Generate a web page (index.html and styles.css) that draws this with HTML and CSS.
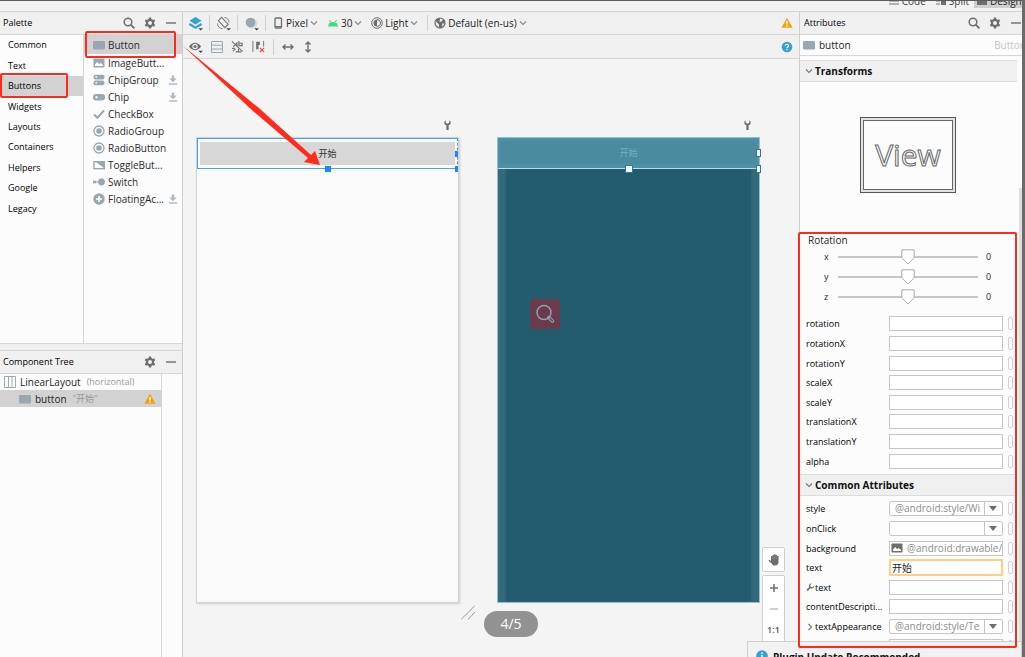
FILE: index.html
```html
<!DOCTYPE html>
<html lang="en">
<head>
<meta charset="utf-8">
<title>Layout Editor</title>
<link rel="stylesheet" href="styles.css">
</head>
<body>
<svg class="defs" aria-hidden="true">
  <symbol id="search" viewBox="0 0 12 12"><circle cx="5" cy="5" r="3.8" fill="none" stroke="currentColor" stroke-width="1.5"/><path d="M7.7 7.7L11.4 11.4" stroke="currentColor" stroke-width="1.8"/></symbol>
  <symbol id="gear" viewBox="0 0 12 12"><circle cx="6" cy="6" r="3.1" fill="none" stroke="currentColor" stroke-width="2.2"/><path d="M6 .6V2.6M6 9.4v2M1.3 3.3L3 4.3M9 7.7l1.7 1M1.3 8.7L3 7.7M9 4.3l1.7-1" stroke="currentColor" stroke-width="2.4"/></symbol>
  <symbol id="minus" viewBox="0 0 12 12"><path d="M1 6h10" stroke="currentColor" stroke-width="1.4"/></symbol>
  <symbol id="warn" viewBox="0 0 12 12"><path d="M6 .8L11.6 10.8H.4z" fill="#f0a30a"/><path d="M6 4v3.4M6 8.3v1.4" stroke="#fff" stroke-width="1.3"/></symbol>
  <symbol id="help" viewBox="0 0 12 12"><circle cx="6" cy="6" r="5.3" fill="#389fd6"/><path d="M4.4 4.7c0-2 3.2-2 3.2 0C7.600 5.800 6 5.800 6 7.200M6 8v1.300" fill="none" stroke="#fff" stroke-width="1.100"/></symbol>
  <symbol id="info" viewBox="0 0 12 12"><circle cx="6" cy="6" r="5.800" fill="#389fd6"/><path d="M6 2.500v1.500M6 5v4.500" stroke="#fff" stroke-width="1.500"/></symbol>
  <symbol id="chev" viewBox="0 0 8 8"><path d="M1 2.500L4 5.500L7 2.500" fill="none" stroke="currentColor" stroke-width="1.100"/></symbol>
  <symbol id="chevr" viewBox="0 0 8 8"><path d="M2.500 1L5.500 4L2.500 7" fill="none" stroke="currentColor" stroke-width="1.100"/></symbol>
  <symbol id="btn" viewBox="0 0 12 12"><rect x="0" y="2" width="12" height="8.500" rx="1.200" fill="currentColor"/></symbol>
  <symbol id="image" viewBox="0 0 12 12"><rect x=".5" y="1.500" width="11" height="9" rx=".8" fill="currentColor"/><path d="M2 9V7.500L4.200 5L6 7L7.800 6L10 8V9z" fill="#fff"/></symbol>
  <symbol id="chipgroup" viewBox="0 0 12 12"><rect x=".5" y=".8" width="11" height="4.600" rx="2" fill="currentColor"/><rect x=".5" y="6.600" width="11" height="4.600" rx="2" fill="currentColor"/><path d="M2.500 2.300h1.500v1.500H2.500zM2.500 8.100h1.500v1.500H2.500z" fill="#fff"/></symbol>
  <symbol id="chip" viewBox="0 0 12 12"><rect x="0" y="3" width="12" height="6.500" rx="3" fill="currentColor"/><path d="M2.500 5.300h2v2h-2z" fill="#fff"/></symbol>
  <symbol id="check" viewBox="0 0 12 12"><path d="M1 6.500L4.300 9.800L11 2.500" fill="none" stroke="currentColor" stroke-width="2"/></symbol>
  <symbol id="radio" viewBox="0 0 12 12"><circle cx="6" cy="6" r="5" fill="none" stroke="currentColor" stroke-width="1.300"/><circle cx="6" cy="6" r="2.800" fill="currentColor"/></symbol>
  <symbol id="toggle" viewBox="0 0 12 12"><rect x="1" y="2.700" width="10.500" height="7" fill="#fff" stroke="currentColor" stroke-width="1.400"/><path d="M3 3H11.500V9.500z" fill="currentColor"/></symbol>
  <symbol id="switch" viewBox="0 0 12 12"><path d="M0 6h3.500" stroke="currentColor" stroke-width="2.600"/><path d="M4 6h3" stroke="currentColor" stroke-width="1"/><circle cx="8.500" cy="6" r="3.400" fill="currentColor"/></symbol>
  <symbol id="fab" viewBox="0 0 12 12"><circle cx="6" cy="6" r="5.700" fill="currentColor"/><path d="M6 3v6M3 6h6" stroke="#fff" stroke-width="1.600"/></symbol>
  <symbol id="download" viewBox="0 0 10 10"><path d="M3.800 .5h2.400V3.500h2.600L5 7.300L1.200 3.500H3.800z" fill="currentColor"/><path d="M.8 9h8.400" stroke="currentColor" stroke-width="1.400"/></symbol>
  <symbol id="wrench" viewBox="0 0 10 12"><path d="M3 .6V3.400L5 4.600L7 3.400V.6Q9 1.800 8.600 4Q8.200 5.700 6.300 6.300V11.600H3.700V6.300Q1.800 5.700 1.400 4Q1 1.800 3 .6z" fill="currentColor"/></symbol>
</svg>

<div class="app">
  <div class="top">
    <div class="strip"></div>
    <nav class="modes">
      <button class="mode"><svg viewBox="0 0 10 8"><path d="M0 1h10M0 4h10M0 7h10" stroke="#6e6e6e"/></svg>Code</button>
      <button class="mode"><svg viewBox="0 0 10 8"><path d="M0 1h4M0 4h4M0 7h4" stroke="#6e6e6e"/><path d="M5 0h5v8H5z" fill="#6e6e6e"/></svg>Split</button>
      <button class="mode active"><svg viewBox="0 0 10 8"><path d="M0 0h10v8H0z" fill="#6e6e6e"/></svg>Design</button>
    </nav>
  </div>

  <main class="cols">
    <aside class="left">
      <section class="palette">
        <header class="bar"><h2>Palette</h2><button class="ib" aria-label="Search"><svg><use href="#search"/></svg></button><button class="ib" aria-label="Settings"><svg><use href="#gear"/></svg></button><button class="ib" aria-label="Hide"><svg><use href="#minus"/></svg></button></header>
        <div class="lists">
          <ul class="cats">
            <li>Common</li><li>Text</li><li class="sel">Buttons</li><li>Widgets</li><li>Layouts</li><li>Containers</li><li>Helpers</li><li>Google</li><li>Legacy</li>
          </ul>
          <ul class="items">
            <li class="sel"><svg><use href="#btn"/></svg><span>Button</span></li>
            <li><svg><use href="#image"/></svg><span>ImageButt...</span></li>
            <li><svg><use href="#chipgroup"/></svg><span>ChipGroup</span><svg class="dl"><use href="#download"/></svg></li>
            <li><svg><use href="#chip"/></svg><span>Chip</span><svg class="dl"><use href="#download"/></svg></li>
            <li><svg><use href="#check"/></svg><span>CheckBox</span></li>
            <li><svg><use href="#radio"/></svg><span>RadioGroup</span></li>
            <li><svg><use href="#radio"/></svg><span>RadioButton</span></li>
            <li><svg><use href="#toggle"/></svg><span>ToggleBut...</span></li>
            <li><svg><use href="#switch"/></svg><span>Switch</span></li>
            <li><svg><use href="#fab"/></svg><span>FloatingAc...</span><svg class="dl"><use href="#download"/></svg></li>
          </ul>
        </div>
      </section>
      <section class="tree">
        <header class="bar"><h2>Component Tree</h2><button class="ib" aria-label="Tree settings"><svg><use href="#gear"/></svg></button><button class="ib" aria-label="Hide tree"><svg><use href="#minus"/></svg></button></header>
        <ul class="nodes">
          <li><svg viewBox="0 0 12 12"><path d="M.5 .5h11v11H.5zM4.500 .5v11M8 .5v11" fill="#fff" stroke="#9aa7b0"/></svg><span>LinearLayout</span><small>(horizontal)</small></li>
          <li class="sel child"><svg><use href="#btn"/></svg><span>button</span><small>"开始"</small><svg class="end"><use href="#warn"/></svg></li>
        </ul>
      </section>
    </aside>

    <section class="center">
      <div class="bar tools">
        <button class="tb" aria-label="Design surface"><svg class="big" viewBox="0 0 16 16"><path d="M8 1L14.500 5L8 9L1.500 5z" fill="#389fd6"/><path d="M1.500 8.500L8 12.500L14.500 8.500" fill="none" stroke="#389fd6" stroke-width="2.400"/><path d="M11 13h5l-2.500 2.500z" fill="#444"/></svg></button>
        <i class="sep"></i>
        <button class="tb" aria-label="Orientation"><svg class="big" viewBox="0 0 16 16"><path d="M2.500 5L6 1.500L13 9L9.500 12.500z" fill="none" stroke="#777" stroke-width="1.200"/><path d="M1.500 8A6 6 0 0 0 7 13.500M9 1.500A6 6 0 0 1 14 7" fill="none" stroke="#777"/><path d="M11 13h5l-2.500 2.500z" fill="#444"/></svg></button>
        <i class="sep"></i>
        <button class="tb" aria-label="UI mode"><svg class="big" viewBox="0 0 16 16"><circle cx="9" cy="8" r="5.500" fill="#d7dce0"/><circle cx="7" cy="7" r="5.200" fill="#9aa7b0"/><path d="M11 13h5l-2.500 2.500z" fill="#444"/></svg></button>
        <i class="sep"></i>
        <button class="tb named"><svg viewBox="0 0 12 12"><rect x="3" y="1" width="6.500" height="10" rx="1" fill="none" stroke="#6e6e6e" stroke-width="1.300"/><path d="M3 9.500h6" stroke="#6e6e6e"/></svg>Pixel<svg class="ch"><use href="#chev"/></svg></button>
        <button class="tb named"><svg viewBox="0 0 12 12"><path d="M1 9.500a5 4.500 0 0 1 10 0z" fill="#3ddc84"/><path d="M2.500 3L4 5.500M9.500 3L8 5.500" stroke="#3ddc84"/></svg>30<svg class="ch"><use href="#chev"/></svg></button>
        <button class="tb named"><svg viewBox="0 0 12 12"><circle cx="6" cy="6" r="5.300" fill="none" stroke="#6e6e6e"/><path d="M6 2.500A3.500 3.500 0 0 0 6 9.500z" fill="#6e6e6e"/><path d="M6 2.500A3.500 3.500 0 0 1 6 9.500" fill="none" stroke="#6e6e6e"/></svg>Light<svg class="ch"><use href="#chev"/></svg></button>
        <i class="sep"></i>
        <button class="tb"><svg viewBox="0 0 12 12"><circle cx="6" cy="6" r="5.600" fill="#6e6e6e"/><path d="M1.500 4L5 7.500V10.500L2 8zM6 1.500L9 2.500L7.500 4.500L5.500 5zM8 6.500H10.500L8.500 10z" fill="#eee"/></svg>Default (en-us)<svg class="ch"><use href="#chev"/></svg></button>
        <button class="tb last" aria-label="Warnings"><svg><use href="#warn"/></svg></button>
      </div>
      <div class="bar tools second">
        <button class="tb" aria-label="View options"><svg class="big" viewBox="0 0 16 16"><path d="M1 8Q7.500 0 14 8Q7.500 16 1 8z" fill="#6e6e6e"/><circle cx="7.500" cy="8" r="2.900" fill="#f0f0f0"/><circle cx="7.500" cy="8" r="1.600" fill="#6e6e6e"/><path d="M11 12.500h5l-2.500 2.500z" fill="#444"/></svg></button>
        <button class="tb" aria-label="Rows"><svg viewBox="0 0 12 12"><path d="M.5 .5h11v11H.5zM.5 4.200h11M.5 8h11" fill="none" stroke="#9aa7b0"/></svg></button>
        <button class="tb" aria-label="Autoconnect"><svg class="mid" viewBox="0 0 14 14"><path d="M1 1.500L12.500 12.500M2.500 7L6.500 3.200V7M8.500 1v5h3.500V3.500H8.500M1 9h3M2 12l3-2.500M5 12.800h6M8 9.500v3" fill="none" stroke="#6e6e6e" stroke-width="1.200"/></svg></button>
        <button class="tb" aria-label="Clear constraints"><svg class="mid" viewBox="0 0 14 14"><path d="M1 1v12M12.500 1v6" stroke="#6e6e6e"/><path d="M4.500 2h4v3.500h-1.500v4.500h-2.500z" fill="#6e6e6e"/><path d="M8.500 8.500l4.500 4.500M13 8.500l-4.500 4.500" stroke="#db5860" stroke-width="1.400"/></svg></button>
        <i class="sep"></i>
        <button class="tb" aria-label="Match width"><svg viewBox="0 0 12 12"><path d="M2 6h8M3.500 3.500L1 6L3.500 8.500M8.500 3.500L11 6L8.500 8.500" fill="none" stroke="#6e6e6e" stroke-width="1.400"/></svg></button>
        <button class="tb" aria-label="Match height"><svg viewBox="0 0 12 12"><path d="M6 2v8M3.500 3.500L6 1L8.500 3.500M3.500 8.500L6 11L8.500 8.500" fill="none" stroke="#6e6e6e" stroke-width="1.400"/></svg></button>
        <button class="tb last" aria-label="Help"><svg><use href="#help"/></svg></button>
      </div>
      <div class="canvas">
        <svg class="wr w1"><use href="#wrench"/></svg>
        <svg class="wr w2"><use href="#wrench"/></svg>
        <div class="phone design"><div class="slot"><div class="fake">开始</div><b class="h hb"></b><b class="h hr"></b><b class="h hc"></b></div></div>
        <div class="phone blue"><div class="slot"><div class="fake">开始</div><b class="h hb"></b><b class="h hr"></b><b class="h hc"></b></div></div>
        <div class="mag"><svg viewBox="0 0 30 30"><circle cx="14" cy="13.500" r="7" fill="none" stroke="#86a2b2" stroke-width="1.500"/><path d="M18.800 18.500L22.500 22" stroke="#86a2b2" stroke-width="3.600" stroke-linecap="round"/><path d="M20 19.500L22.500 22" stroke="#6b3a4b" stroke-width="1.200" stroke-linecap="round"/></svg></div>
        <svg class="grip" viewBox="0 0 14 15"><path d="M0 14.500L14 .5M7 14.500L14 7" stroke="#999" fill="none"/></svg>
        <button class="zb pan" aria-label="Pan"><svg viewBox="0 0 12 12"><path d="M3 7V2h1.500V1H6V.3h1.500V1H9v1h1.500v6.500Q10 11.500 7.500 11.500H5.500L.5 6.500L1.500 5.800z" fill="#6e6e6e"/><path d="M4.700 2v3M6.400 1.500V5M8.200 2v3" stroke="#aaa" stroke-width=".4"/></svg></button>
        <div class="zooms">
          <button class="zb" aria-label="Zoom in"><svg viewBox="0 0 12 12"><path d="M6 2v8M2 6h8" stroke="#6e6e6e" stroke-width="1.500"/></svg></button>
          <button class="zb" aria-label="Zoom out"><svg viewBox="0 0 12 12"><path d="M2 6h8" stroke="#b5b5b5" stroke-width="1.300"/></svg></button>
          <button class="zb">1:1</button>
        </div>
      </div>
    </section>

    <aside class="right">
      <header class="bar"><h2>Attributes</h2><button class="ib" aria-label="Search attributes"><svg><use href="#search"/></svg></button><button class="ib" aria-label="Attribute settings"><svg><use href="#gear"/></svg></button><button class="ib" aria-label="Hide attributes"><svg><use href="#minus"/></svg></button></header>
      <div class="who"><svg><use href="#btn"/></svg><span>button</span><em>Button</em></div>
      <div class="scroll">
        <h3><svg><use href="#chev"/></svg>Transforms</h3>
        <div class="preview"><div class="frame"><span>View</span></div></div>
        <div class="rot">
          <p>Rotation</p>
          <div class="sl"><label for="rx">x</label><input id="rx" type="range" min="-180" max="180" value="0"><output>0</output></div>
          <div class="sl"><label for="ry">y</label><input id="ry" type="range" min="-180" max="180" value="0"><output>0</output></div>
          <div class="sl"><label for="rz">z</label><input id="rz" type="range" min="-180" max="180" value="0"><output>0</output></div>
        </div>
        <div class="rows">
          <div class="row"><label for="f1">rotation</label><input id="f1"><i></i></div>
          <div class="row"><label for="f2">rotationX</label><input id="f2"><i></i></div>
          <div class="row"><label for="f3">rotationY</label><input id="f3"><i></i></div>
          <div class="row"><label for="f4">scaleX</label><input id="f4"><i></i></div>
          <div class="row"><label for="f5">scaleY</label><input id="f5"><i></i></div>
          <div class="row"><label for="f6">translationX</label><input id="f6"><i></i></div>
          <div class="row"><label for="f7">translationY</label><input id="f7"><i></i></div>
          <div class="row"><label for="f8">alpha</label><input id="f8"><i></i></div>
        </div>
        <h3><svg><use href="#chev"/></svg>Common Attributes</h3>
        <div class="rows common">
          <div class="row"><label for="g1">style</label><select id="g1"><option>@android:style/Widget</option></select><i></i></div>
          <div class="row"><label for="g2">onClick</label><select id="g2"><option></option></select><i></i></div>
          <div class="row"><label for="g3">background</label><div class="pic"><svg><use href="#image"/></svg><input id="g3" value="@android:drawable/btn_default"></div><i></i></div>
          <div class="row"><label for="g4">text</label><input id="g4" class="focus" value="开始"><i></i></div>
          <div class="row"><label for="g5"><svg class="tool"><use href="#wrench"/></svg>text</label><input id="g5"><i></i></div>
          <div class="row"><label for="g6">contentDescripti...</label><input id="g6"><i></i></div>
          <div class="row"><label for="g7"><svg><use href="#chevr"/></svg>textAppearance</label><select id="g7"><option>@android:style/TextAppearance</option></select><i></i></div>
          <div class="row"><span></span><input aria-label="More"><i></i></div>
        </div>
      </div>
      <div class="thumb"></div>
    </aside>
  </main>

  <div class="notice"><svg><use href="#info"/></svg><strong>Plugin Update Recommended</strong></div>
  <div class="pill">4/5</div>
  <div class="mark m1"></div>
  <div class="mark m2"></div>
  <div class="mark m3"></div>
  <svg class="arrow" viewBox="0 0 140 122"><path d="M0 0L78 64L129 110L133 106L138 120L122 117L126 113L71 66z" fill="#fe2a1c"/></svg>
</div>
</body>
</html>
```
FILE: styles.css
```css
* { box-sizing: border-box; }
html, body { height: 100%; }
body { margin: 0; font: 10px/14px "Open Sans", "Noto Sans", "Noto Sans CJK SC", sans-serif; color: #1d1d1d; overflow: hidden; }
button, input, select { font: inherit; color: inherit; margin: 0; padding: 0; border: 0; background: none; }
ul { list-style: none; margin: 0; padding: 0; }
h2, h3, p { margin: 0; font-size: inherit; font-weight: 400; }
svg { display: block; width: 12px; height: 12px; flex: none; }
.defs { display: none; }

.app { position: relative; height: 100%; display: flex; flex-direction: column; background: #f0f0f0; overflow: hidden; border-right: 3px solid #6b6b6b; }
.top { height: 12px; flex: none; border-bottom: 1px solid #d6d6d6; background: #f3f2f3; overflow: hidden; }
.strip { position: relative; z-index: 1; height: 1px; background: #5f5a5d; }
.modes { display: flex; justify-content: flex-end; margin-top: -7px; }
.mode { display: flex; flex: none; align-items: center; gap: 3px; height: 14px; padding: 0 5px; color: #444; }
.mode svg { width: 10px; height: 8px; }
.mode.active { background: #cfcfcf; width: 48px; padding: 0 0 0 3px; color: #222; }

.cols { flex: 1; min-height: 0; display: grid; grid-template-columns: 183px minmax(0, 1fr) 223px; }
.bar { height: 23px; flex: none; display: flex; align-items: center; border-bottom: 1px solid #d6d6d6; background: #f0f0f0; }
.bar h2 { flex: 1; padding-left: 3px; font-size: 9px; color: #000; }
.ib { color: #6e6e6e; width: 12px; margin-right: 9px; }
.ib:last-child { margin-right: 5px; }

.left { display: flex; flex-direction: column; border-right: 1px solid #cfcfcf; background: #fcfcfc; min-height: 0; }
.palette { height: 332px; display: flex; flex-direction: column; border-bottom: 1px solid #d6d6d6; }
.lists { flex: 1; display: grid; grid-template-columns: 84px 1fr; }
.cats { border-right: 1px solid #d6d6d6; display: grid; grid-template-rows: repeat(9, 1fr); padding-bottom: 124px; font-size: 9px; color: #000; }
.cats li { display: flex; align-items: center; padding-left: 8px; }
.sel { background: #d2d2d2; }
.items li { display: flex; align-items: center; height: 17px; padding: 0 4px 0 9px; gap: 3px; color: #2b2b2b; }
.items li:first-child { height: 19px; }
.items svg, .nodes svg, .who svg { color: #9aa7b0; }
.items span { flex: 1; }
.items .dl { width: 10px; height: 10px; color: #afb9c0; }
.tree { border-top: 6px solid #f0f0f0; flex: 1; display: flex; flex-direction: column; }
.tree .bar { height: 24px; border-top: 1px solid #d6d6d6; }
.nodes { flex: 1; width: 162px; border-right: 1px solid #d6d6d6; }
.nodes li { display: flex; align-items: center; height: 16px; padding-left: 4px; gap: 4px; }
.nodes li:last-child { height: 17px; }
.nodes .child { padding-left: 19px; }
.nodes small { font-size: 9px; color: #999; padding-left: 2px; }
.nodes .end { margin-left: auto; margin-right: 5px; }

.center { display: flex; flex-direction: column; min-width: 0; }
.tools { padding: 0 6px 0 5px; gap: 6px; white-space: nowrap; }
.second { height: 24px; gap: 8px; }
.tb { display: flex; align-items: center; gap: 2px; color: #222; }
.tb .big { width: 15px; height: 15px; }
.tb .mid { width: 13px; height: 13px; }
.tb .ch { width: 8px; height: 8px; color: #888; }
.named { margin-right: 3px; }
.tb.last { margin-left: auto; }
.sep { width: 1px; height: 16px; background: #d0d0d0; }
.canvas { position: relative; flex: 1; background: #f4f4f4; overflow: hidden; }
.phone { position: absolute; top: 78px; width: 263px; height: 466px; }
.design { left: 13px; background: #fafafa; border: 1px solid #d2d2d2; box-shadow: 1px 1px 2px #ccc; }
.blue { left: 314px; background: #235c6f; border: 1px solid #8fc0d2; box-shadow: inset 8px 0 2px #34697b, inset -8px 0 2px #34697b; }
.slot { position: relative; height: 31px; border: 1px solid #4d9fec; padding: 3px 2px; border-right-style: dashed; }
.fake { height: 23px; background: #d6d7d6; display: flex; align-items: center; justify-content: center; font-size: 9px; color: #333; }
.blue .slot { background: #4f90a4; border: 0; border-bottom: 1px solid #b9dbe5; }
.blue .fake { background: #4a8ba0; color: #75afc0; }
.h { position: absolute; width: 6px; height: 6px; background: #1e88f5; }
.blue .h { background: #eefaff; outline: 1px solid #37768a; }
.hb { left: 50%; bottom: -4px; margin-left: -3px; }
.hr { right: -1px; top: 12px; width: 3px; }
.hc { right: -1px; bottom: -4px; width: 3px; }
.wr { position: absolute; top: 60px; width: 9px; height: 12px; color: #6e6e6e; }
.w1 { left: 260px; }
.w2 { left: 560px; }
.mag { position: absolute; left: 347px; top: 240px; width: 30px; height: 30px; border-radius: 3px; background: #6b3a4b; }
.mag svg { width: 30px; height: 30px; }
.grip { position: absolute; left: 278px; top: 546px; width: 14px; height: 15px; }
.zb { display: flex; width: 100%; height: 21px; align-items: center; justify-content: center; font-size: 9px; font-weight: 600; color: #555; }
.pan, .zooms { position: absolute; right: 14px; width: 23px; background: #fff; border: 1px solid #cfcfcf; border-radius: 2px; }
.pan { top: 488px; height: 25px; width: 23px; }
.zooms { top: 516px; height: 90px; padding-top: 1px; }

.right { position: relative; display: flex; flex-direction: column; min-height: 0; border-left: 1px solid #cfcfcf; background: #fcfcfc; overflow: hidden; }
.right .bar h2 { padding-left: 4px; }
.right .ib:last-child { margin-right: 0; }
.who { height: 21px; flex: none; display: flex; align-items: center; gap: 4px; padding-left: 3px; border-bottom: 1px solid #d6d6d6; overflow: hidden; }
.who em { margin-left: auto; font-style: normal; color: #c4c4c4; margin-right: -4px; }
.scroll { padding-top: 4px; margin-right: 5px; }
h3 { height: 22px; display: flex; align-items: center; gap: 2px; padding-left: 5px; font-weight: 700; background: #f0f0f0; border: 1px solid #dcdcdc; border-width: 1px 0; color: #111; }
h3 svg, .row label svg { width: 8px; height: 8px; color: #777; }
.preview { height: 151px; display: flex; justify-content: center; padding: 35px 1px 0 0; }
.frame { width: 96px; height: 76px; border: 1px solid #555; padding: 2px; font-size: 30px; color: #fcfcfc; -webkit-text-stroke: 1px #666; background: #e4e4e4; }
.frame span { display: flex; height: 100%; align-items: center; justify-content: center; border: 1px solid #666; background: #fcfcfc; }
.rot { height: 81px; }
.rot p { padding-left: 8px; line-height: 14px; }
.sl { display: grid; grid-template-columns: 38px 140px 1fr; align-items: center; height: 20px; font-size: 9px; }
.sl label { padding-left: 24px; }
.sl output { padding-left: 8px; }
.sl input { appearance: none; width: 140px; height: 17px; background: linear-gradient(#c6c6c6, #c6c6c6) 0 7px / 100% 2px no-repeat; }
.sl input::-webkit-slider-thumb { appearance: none; width: 14px; height: 16px; border: 0; background: url("data:image/svg+xml,%3Csvg xmlns='http://www.w3.org/2000/svg' viewBox='0 0 14 16'%3E%3Cpath d='M.8 .8H13.2V9L7 15L.8 9z' fill='%23fff' stroke='%23aaa'/%3E%3C/svg%3E"); }
.rows { display: grid; grid-template-rows: repeat(8, 1fr); height: 157px; }
.rows:not(.common) { margin-bottom: 3px; }
.common { margin-top: 3px; }
.row { display: grid; grid-template-columns: 83px minmax(0, 1fr) 10px; padding: 0 4px 0 6px; align-items: center; min-height: 0; }
.row label { display: flex; align-items: center; white-space: nowrap; padding-top: 1px; gap: 1px; font-size: 9px; color: #000; }
.row > input, .row select, .pic { width: 100%; height: 15px; border: 1px solid #c6c6c6; background-color: #fff; color: #8c8c8c; line-height: 13px; }
.row > i { width: 5px; height: 13px; border: 1px solid #d0d0d0; border-radius: 2px; margin-left: 5px; }
.row select { appearance: none; padding: 0 22px 0 5px; border-radius: 2px; background: linear-gradient(#c6c6c6, #c6c6c6) right 17px top 0 / 1px 100% no-repeat, url("data:image/svg+xml,%3Csvg xmlns='http://www.w3.org/2000/svg' viewBox='0 0 8 5'%3E%3Cpath d='M0 0H8L4 5z' fill='%236e6e6e'/%3E%3C/svg%3E") right 5px center / 8px 5px no-repeat #fff; }
.pic { display: flex; align-items: center; gap: 4px; padding-left: 1px; overflow: hidden; }
.pic input { flex: 1; min-width: 0; height: 13px; }
.pic svg { color: #6e6e6e; }
.row > .focus { border: 2px solid #ffd083; height: 17px; color: #222; padding-left: 1px; }
.row label .tool { width: 8px; height: 9px; transform: rotate(45deg); }
.thumb { position: absolute; right: 0; top: 176px; width: 3px; bottom: 0; background: #dedede; }

.notice { position: absolute; left: 747px; right: 0; bottom: 0; height: 16px; padding: 8px 0 0 8px; background: #f2f2f2; border: 1px solid #cfcfcf; border-bottom: 0; display: flex; gap: 5px; overflow: hidden; color: #111; }
.pill { position: absolute; left: 484px; top: 611px; width: 54px; height: 26px; border-radius: 13px; background: #929292; color: #fff; font-size: 14px; line-height: 25px; text-align: center; }
.mark { position: absolute; border: 2px solid #fe2a1c; border-radius: 2px; }
.m1 { left: 85px; top: 31px; width: 91px; height: 27px; }
.m2 { left: 0; top: 73px; width: 68px; height: 25px; }
.m3 { left: 798px; top: 232px; width: 219px; height: 416px; }
.arrow { position: absolute; left: 182px; top: 45px; width: 140px; height: 122px; }
```
